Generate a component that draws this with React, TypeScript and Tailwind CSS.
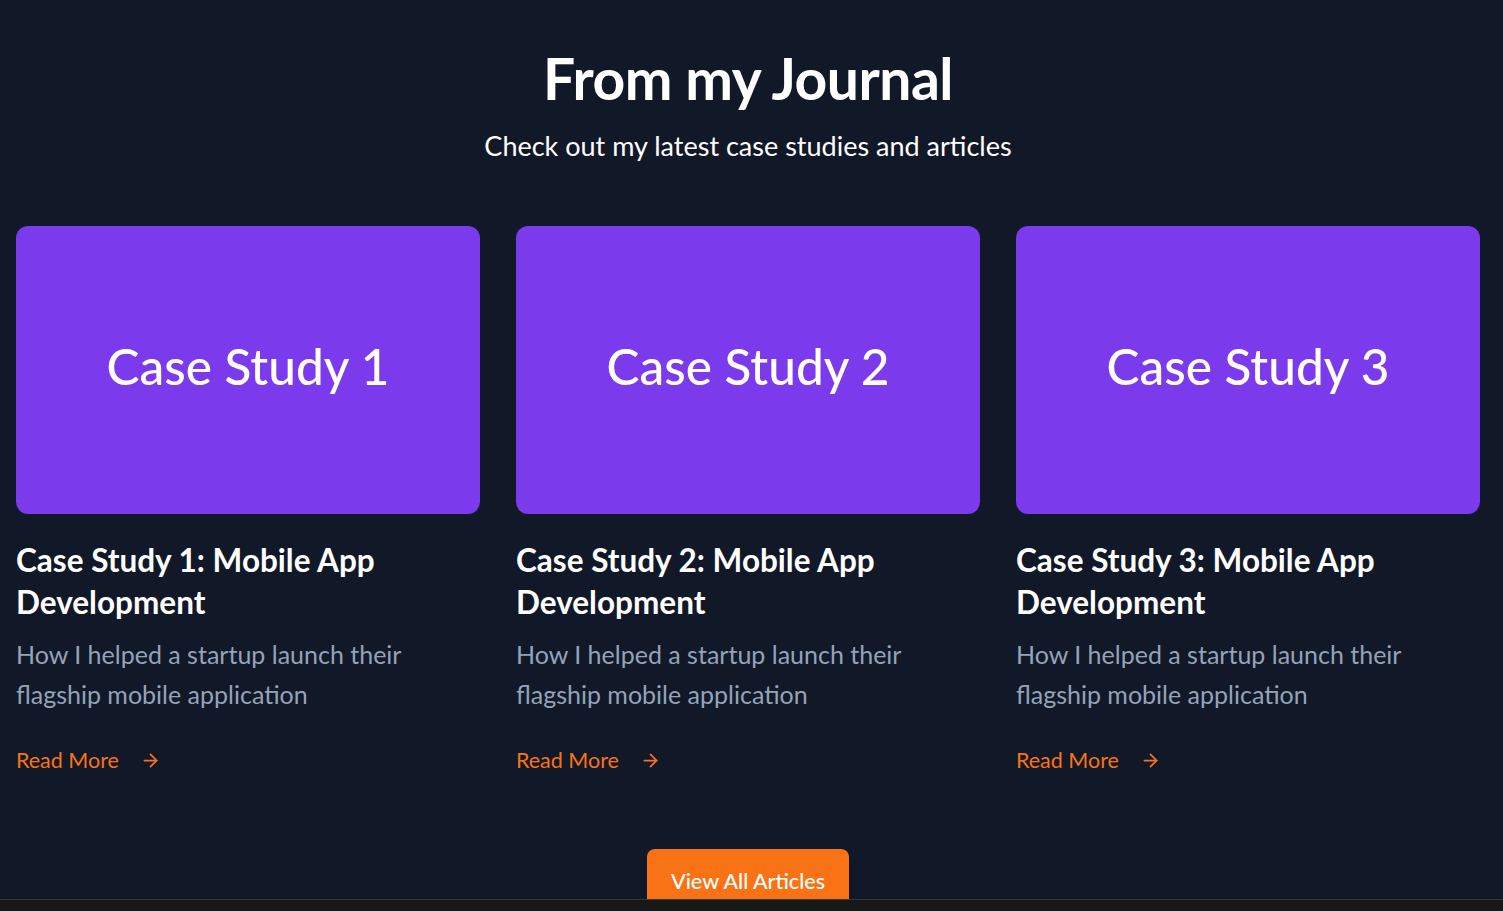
import { ArrowRight } from "lucide-react";

const POSTS = [1, 2, 3].map((n) => ({
  id: n,
  cover: `Case Study ${n}`,
  title: `Case Study ${n}: Mobile App Development`,
  excerpt: "How I helped a startup launch their flagship mobile application",
}));

export default function App() {
  return (
    <div
      className="flex h-screen flex-col bg-[#111827] text-white"
      style={{ fontFamily: "Lato, 'Noto Sans', sans-serif" }}
    >
      <section className="flex-1 overflow-hidden pr-[7px]">
        <div className="pt-[50px] text-center">
          <h2 className="text-[57px] font-bold leading-[56px] tracking-[-0.5px]">From my Journal</h2>
          <p className="mt-[22px] text-[27px] leading-[36px]">Check out my latest case studies and articles</p>
        </div>

        <div className="mx-4 mt-[62px] grid grid-cols-3 gap-9">
          {POSTS.map((post) => (
            <article key={post.id}>
              <div className="flex h-[288px] items-center justify-center rounded-xl bg-[#7c3aed] pb-[7px]">
                <span className="text-[49.5px] font-medium">{post.cover}</span>
              </div>
              <h3 className="mt-[25px] pr-20 text-[31.5px] font-bold leading-[42px]">{post.title}</h3>
              <p className="mt-[11px] pr-16 text-[25px] leading-[40px] text-[#94a3b8]">{post.excerpt}</p>
              <a href="#" className="mt-[30px] flex items-center gap-[21px] text-[21.5px] leading-[32px] text-[#f97316]">
                Read More
                <ArrowRight size={21} strokeWidth={2} />
              </a>
            </article>
          ))}
        </div>

        <div className="mt-[73px] flex justify-center">
          <button className="rounded-lg bg-[#f97316] px-6 pb-4 pt-[18px] text-[21.5px] font-medium leading-[28px] text-white">
            View All Articles
          </button>
        </div>
      </section>
      <div className="h-[12px] shrink-0 border-t border-[#3a3a3a] bg-[#181818]" />
    </div>
  );
}
